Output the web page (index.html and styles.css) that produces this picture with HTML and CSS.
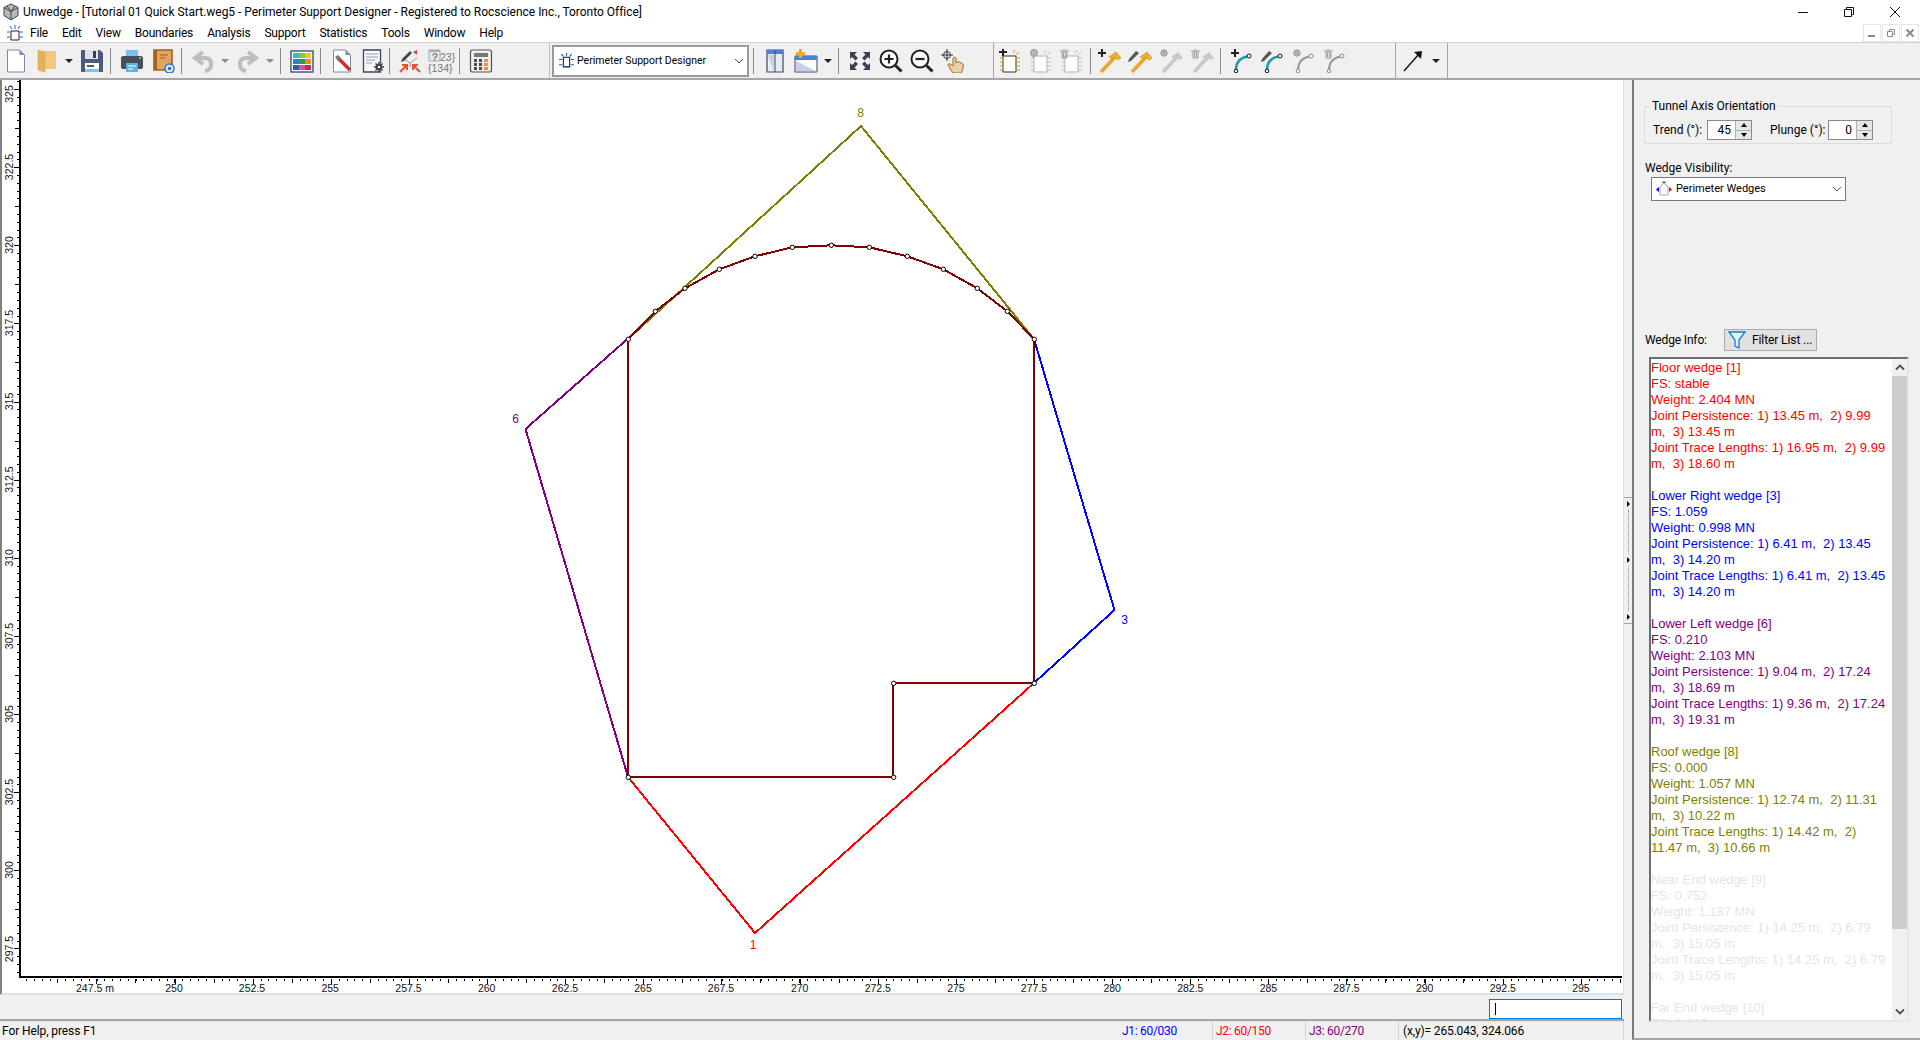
FILE: index.html
```html
<!DOCTYPE html>
<html lang="en">
<head>
<meta charset="utf-8">
<title>Unwedge</title>
<link rel="stylesheet" href="styles.css">
</head>
<body>
<div class="titlebar">
  <svg class="app-ico" width="18" height="18" viewBox="0 0 18 18"><path d="M9 1l7 3.500v8L9 17l-7-4.500v-8z" fill="#b8b8b8" stroke="#444"/><path d="M2 4.500l7 4 7-4M9 8.500V17M5 3l4 5.500L13 3" fill="none" stroke="#444"/></svg>
  <span class="title-text">Unwedge - [Tutorial 01 Quick Start.weg5 - Perimeter Support Designer - Registered to Rocscience Inc., Toronto Office]</span>
  <div class="winctl">
    <span class="wbtn"><svg width="12" height="12" viewBox="0 0 12 12"><path d="M1 6.500h10" stroke="#111"/></svg></span>
    <span class="wbtn"><svg width="12" height="12" viewBox="0 0 12 12"><path d="M1.500 3.500h7v7h-7zM3.500 3.500v-2h7v7h-2" fill="none" stroke="#111"/></svg></span>
    <span class="wbtn"><svg width="12" height="12" viewBox="0 0 12 12"><path d="M1 1l10 10M11 1L1 11" stroke="#111"/></svg></span>
  </div>
</div>
<div class="menubar">
  <svg class="menu-ico" width="16" height="16" viewBox="0 0 16 16"><path d="M4 6h8v9H4z" fill="#fff" stroke="#223"/><path d="M8 0v4M3 1l2 3M13 1l-2 3M0 7h3M16 7h-3M0 12h3M16 12h-3" stroke="#1a5fd0"/></svg>
  <span class="mi">File</span><span class="mi">Edit</span><span class="mi">View</span><span class="mi">Boundaries</span><span class="mi">Analysis</span><span class="mi">Support</span><span class="mi">Statistics</span><span class="mi">Tools</span><span class="mi">Window</span><span class="mi">Help</span>
  <div class="mdi">
    <span class="mdibtn"><svg width="10" height="10" viewBox="0 0 10 10"><path d="M1 8h7" stroke="#8a8a8a" stroke-width="2"/></svg></span>
    <span class="mdibtn"><svg width="10" height="10" viewBox="0 0 10 10"><path d="M1.500 3.500h5v5h-5zM3.500 3V1.500h5v5H7" fill="none" stroke="#8a8a8a"/></svg></span>
    <span class="mdibtn"><svg width="10" height="10" viewBox="0 0 10 10"><path d="M1.500 1.500l7 7M8.500 1.500l-7 7" stroke="#8a8a8a" stroke-width="2"/></svg></span>
  </div>
</div>
<div class="toolbar">
  <div class="tbsec sec1">
    <span class="btn"><svg width="24" height="24" viewBox="0 0 24 24"><path d="M3.500 1h12l5 5v17h-17z" fill="#fff" stroke="#7b8aa8"/><path d="M15.500 1v5h5z" fill="#7b8aa8"/></svg></span>
    <span class="btn"><svg width="24" height="24" viewBox="0 0 24 24"><path d="M8 2h13v18H8z" fill="#f0c880"/><path d="M3 1l7 2v20l-7-2z" fill="#e4b060" stroke="#d9a754" stroke-width=".6"/></svg></span>
    <span class="drop"><i class="tri"></i></span>
    <span class="btn"><svg width="24" height="24" viewBox="0 0 24 24"><path d="M1 1h19l3 3v19H1z" fill="#4c5a80"/><path d="M5 1h13v9H5z" fill="#dfe3ec"/><path d="M13 2h3v7h-3z" fill="#333f5e"/><path d="M5 14h14v9H5z" fill="#fff"/><path d="M7 17h7" stroke="#4c5a80" stroke-width="2"/><path d="M5 20h14v3H5z" fill="#86c2ee"/></svg></span>
    <i class="sep"></i>
    <span class="btn"><svg width="24" height="24" viewBox="0 0 24 24"><path d="M6 1h12v7H6z" fill="#78c0ee"/><path d="M3 7h18q2 0 2 3v8q0 2-2 2H3q-2 0-2-2v-8q0-3 2-3z" fill="#46505a"/><path d="M19 8h2v2h-2z" fill="#3fce6a"/><path d="M6 14h12v9H6z" fill="#5eaee8"/><path d="M8 17h8M8 20h5" stroke="#fff"/></svg></span>
    <span class="btn"><svg width="24" height="24" viewBox="0 0 24 24"><path d="M3 1h18v20H3z" fill="#e0a560" stroke="#a55f1e" stroke-width="1.600"/><path d="M3 1h3v20H3z" fill="#a55f1e"/><path d="M9 6h8M9 9h5" stroke="#a55f1e"/><circle cx="18.500" cy="19.500" r="4.500" fill="#dcebfa" stroke="#2d72cc" stroke-width="1.500"/><circle cx="18.500" cy="19.500" r="1.800" fill="#2d72cc"/></svg></span>
    <i class="sep"></i>
    <span class="btn"><svg width="24" height="24" viewBox="0 0 24 24"><path d="M12 3L4 9l8 6" fill="none" stroke="#bdbdbd" stroke-width="4"/><path d="M5 9h9q6 0 6 6v1q0 5-6 6" fill="none" stroke="#bdbdbd" stroke-width="4"/></svg></span>
    <span class="drop"><i class="tri gray"></i></span>
    <span class="btn"><svg width="24" height="24" viewBox="0 0 24 24"><path d="M12 3l8 6-8 6" fill="none" stroke="#bdbdbd" stroke-width="4"/><path d="M19 9h-9q-6 0-6 6v1q0 5 6 6" fill="none" stroke="#bdbdbd" stroke-width="4"/></svg></span>
    <span class="drop"><i class="tri gray"></i></span>
    <i class="sep"></i>
    <span class="btn"><svg width="24" height="24" viewBox="0 0 24 24"><path d="M1 2h22v21H1z" fill="#fff" stroke="#4c5a80" stroke-width="1.500"/><path d="M3 4h6v5H3z" fill="#35b8c8"/><path d="M9 4h6v5H9z" fill="#8cc63f"/><path d="M15 4h6v5h-6z" fill="#f2c230"/><path d="M3 10h6v5H3z" fill="#2a82c8"/><path d="M9 10h6v5H9z" fill="#27a045"/><path d="M15 10h6v5h-6z" fill="#ee8a1f"/><path d="M3 16h6v5H3z" fill="#2a5db0"/><path d="M9 16h6v5H9z" fill="#e04bb0"/><path d="M15 16h6v5h-6z" fill="#d02840"/></svg></span>
    <i class="sep"></i>
    <span class="btn"><svg width="24" height="24" viewBox="0 0 24 24"><path d="M3.500 1h12l5 5v17h-17z" fill="#fff" stroke="#7b8aa8"/><path d="M15.500 1v5h5z" fill="#7b8aa8"/><path d="M8 9l12 12" stroke="#c8302a" stroke-width="3.500"/><path d="M5 8l3-2 3 3-3 3z" fill="#777"/></svg></span>
    <span class="btn"><svg width="24" height="24" viewBox="0 0 24 24"><path d="M2.500 1h17v22h-17z" fill="#f6f8fb" stroke="#3c4660" stroke-width="1.300"/><path d="M5 5h12M5 8h12M5 11h9M5 14h6" stroke="#8aa0c0"/><circle cx="18" cy="18" r="3.500" fill="#333" stroke="#fff"/><path d="M18 13v10M13 18h10M14.500 14.500l7 7M21.500 14.500l-7 7" stroke="#333" stroke-width="1.500"/><circle cx="18" cy="18" r="1.300" fill="#fff"/></svg></span>
    <i class="sep sep-n"></i>
    <span class="btn"><svg width="24" height="24" viewBox="0 0 24 24"><path d="M5 9l7 5 7-5M12 14v4" fill="none" stroke="#999"/><path d="M4 10l8-8 2 2-8 8-3 1z" fill="#444"/><path d="M15 3l4-2 0 5z" fill="#e84030"/><path d="M2 23l7-7M4 16h5v5M22 23l-7-7M20 16h-5v5" fill="none" stroke="#ef4a35" stroke-width="2"/></svg></span>
    <span class="btn btn-txt"><svg width="26" height="24" viewBox="0 0 26 24"><path d="M1 1h11v11H1z" fill="#e8e8e8" stroke="#a8a8a8"/><path d="M1 1h11v2H1z" fill="#a8a8a8"/><text class="ico-q" x="3.500" y="11.500">?</text><text class="ico-t" x="12" y="12">23}</text><text class="ico-t" x="0" y="22.500">{134}</text></svg></span>
    <i class="sep"></i>
    <span class="btn"><svg width="24" height="24" viewBox="0 0 24 24"><path d="M3.500 1h17q2 0 2 2v18q0 2-2 2h-17q-2 0-2-2V3q0-2 2-2z" fill="#eee" stroke="#555" stroke-width="1.200"/><path d="M5 4h14v4H5z" fill="#777"/><path d="M5 10h3v3H5zM10 10h3v3h-3zM5 14h3v3H5zM10 14h3v3h-3zM5 18h3v3H5zM10 18h3v3h-3z" fill="#4a4a4a"/><path d="M15 10h4v3h-4zM15 14h4v3h-4zM15 18h4v3h-4z" fill="#e8943a"/></svg></span>
  </div>
  <div class="tbsec sec2">
    <div class="tcombo">
      <svg width="17" height="17" viewBox="0 0 16 16"><path d="M5 5h6v9H5z" fill="#fff" stroke="#122"/><path d="M8 1v3M3 2l2 2M13 2l-2 2M1 7h3M15 7h-3M1 12h3M15 12h-3" stroke="#1a5fd0"/></svg>
      <span class="tcombo-text">Perimeter Support Designer</span>
      <svg class="chev" width="10" height="6" viewBox="0 0 10 6"><path d="M1 1l4 4 4-4" fill="none" stroke="#444"/></svg>
    </div>
    <i class="sep sep-c"></i>
    <span class="btn"><svg width="24" height="24" viewBox="0 0 24 24"><path d="M4 1h16v22H4z" fill="#e8ecf4" stroke="#3d4866" stroke-width="1.200"/><path d="M4 1h16v4H4z" fill="#4f7fd8"/><path d="M12 1v22" stroke="#3d4866"/><path d="M5 6l6 16V6z" fill="#c6d0e2"/></svg></span>
    <span class="btn"><svg width="24" height="24" viewBox="0 0 24 24"><path d="M1 7h22v16H1z" fill="#fff" stroke="#3d4866"/><path d="M1 7h22v4H1z" fill="#4f7fd8"/><path d="M2 12l20 10H2z" fill="#c6d0e2"/><path d="M5 0h3v3h3v3H8v3H5V6H2V3h3z" fill="#f4a81c"/></svg></span>
    <span class="drop"><i class="tri"></i></span>
    <i class="sep"></i>
    <span class="btn"><svg width="24" height="24" viewBox="0 0 24 24"><g fill="#3a4050"><path id="fit" d="M2 3h7L6.500 5.500 10 9l-2.500 2.500L4 8 2 10z"/><path d="M22 3h-7l2.500 2.500L14 9l2.500 2.500L20 8l2 2z"/><path d="M2 21h7l-2.500-2.500L10 15l-2.500-2.500L4 16l-2-2z"/><path d="M22 21h-7l2.500-2.500L14 15l2.500-2.500L20 16l2-2z"/></g></svg></span>
    <span class="btn"><svg width="24" height="24" viewBox="0 0 24 24"><circle cx="10" cy="10" r="8.500" fill="#fff" stroke="#222" stroke-width="2"/><path d="M10 5.500v9M5.500 10h9" stroke="#222" stroke-width="2.200"/><path d="M16.500 16.500l6 6" stroke="#222" stroke-width="3"/></svg></span>
    <span class="btn"><svg width="24" height="24" viewBox="0 0 24 24"><circle cx="10" cy="10" r="8.500" fill="#fff" stroke="#222" stroke-width="2"/><path d="M5.500 10h9" stroke="#222" stroke-width="2.200"/><path d="M16.500 16.500l6 6" stroke="#222" stroke-width="3"/></svg></span>
    <span class="btn"><svg width="24" height="24" viewBox="0 0 24 24"><circle cx="6" cy="6" r="3.500" fill="none" stroke="#333"/><path d="M6 0v12M0 6h12" stroke="#333"/><path d="M12 9q2-2 3 0v5l1-1q3-1 4 1l2 1q1 4-1 7l-1 2h-8l-2-3-3-5q0-2 2-1l3 2z" fill="#e8cfa8" stroke="#a06a1e"/></svg></span>
  </div>
  <div class="tbsec sec3">
    <span class="btn"><svg width="24" height="24" viewBox="0 0 24 24"><path d="M5 7h13v16H5z" fill="#fff" stroke="#333"/><path d="M2 9h3M2 13h3M2 17h3M2 21h3M18 9h4M18 13h4M18 17h4M18 21h4M15 4l2-3M18 6l3-3" stroke="#d89a2c"/><path d="M1 3h8M5 0v7" stroke="#222" stroke-width="2"/></svg></span>
    <span class="btn"><svg width="24" height="24" viewBox="0 0 24 24"><path d="M5 7h13v16H5z" fill="#fff" stroke="#b5b5b5"/><path d="M2 9h3M2 13h3M2 17h3M2 21h3M18 9h4M18 13h4M18 17h4M18 21h4M15 4l2-3M18 6l3-3" stroke="#bcbcbc"/><circle cx="5" cy="4" r="3" fill="none" stroke="#a8a8a8" stroke-width="2"/><path d="M5 0v8M1 4h8M2 1l6 6M8 1L2 7" stroke="#a8a8a8"/></svg></span>
    <span class="btn"><svg width="24" height="24" viewBox="0 0 24 24"><path d="M5 7h13v16H5z" fill="#fff" stroke="#b5b5b5"/><path d="M2 9h3M2 13h3M2 17h3M2 21h3M18 9h4M18 13h4M18 17h4M18 21h4M15 4l2-3M18 6l3-3" stroke="#bcbcbc"/><path d="M0 2h9M3 0h3M2 3h5v6H2z" fill="none" stroke="#999"/><path d="M3.500 4v4M5.500 4v4" stroke="#999"/></svg></span>
    <i class="sep sep-s"></i>
    <span class="btn"><svg width="24" height="24" viewBox="0 0 24 24"><path d="M4 23L19 7" stroke="#e8a828" stroke-width="3.500"/><path d="M12 8l7-5 5 6-3 2-3-3-2 2z" fill="#f0b030" stroke="#c88a10" stroke-width=".6"/><path d="M1 4h8M5 0v8" stroke="#222" stroke-width="2"/></svg></span>
    <span class="btn"><svg width="24" height="24" viewBox="0 0 24 24"><path d="M4 23L19 7" stroke="#e8a828" stroke-width="3.500"/><path d="M12 8l7-5 5 6-3 2-3-3-2 2z" fill="#f0b030" stroke="#c88a10" stroke-width=".6"/><path d="M1 10l7-8 3 2-8 8-3 1z" fill="#555"/></svg></span>
    <span class="btn"><svg width="24" height="24" viewBox="0 0 24 24"><path d="M4 23L19 7" stroke="#c8c8c8" stroke-width="3.500"/><path d="M12 8l7-5 5 6-3 2-3-3-2 2z" fill="#c8c8c8"/><circle cx="5" cy="4" r="2.500" fill="none" stroke="#a8a8a8" stroke-width="2"/><path d="M5 0v8M1 4h8M2 1l6 6M8 1L2 7" stroke="#a8a8a8"/></svg></span>
    <span class="btn"><svg width="24" height="24" viewBox="0 0 24 24"><path d="M4 23L19 7" stroke="#c8c8c8" stroke-width="3.500"/><path d="M12 8l7-5 5 6-3 2-3-3-2 2z" fill="#c8c8c8"/><path d="M1 2h9M4 0h3M3 3h5v6H3z" fill="none" stroke="#999"/><path d="M4.500 4v4M6.500 4v4" stroke="#999"/></svg></span>
    <i class="sep"></i>
    <span class="btn"><svg width="24" height="24" viewBox="0 0 24 24"><path d="M6 21q0-11 11-13.500" fill="none" stroke="#1a9aa8" stroke-width="2.500"/><circle cx="19" cy="7" r="2" fill="#fff" stroke="#111"/><circle cx="6" cy="22" r="1.800" fill="#fff" stroke="#111"/><path d="M1 4h8M5 0v8" stroke="#222" stroke-width="2"/></svg></span>
    <span class="btn"><svg width="24" height="24" viewBox="0 0 24 24"><path d="M6 21q0-11 11-13.500" fill="none" stroke="#1a9aa8" stroke-width="2.500"/><circle cx="19" cy="7" r="2" fill="#fff" stroke="#111"/><circle cx="6" cy="22" r="1.800" fill="#fff" stroke="#111"/><path d="M1 10l7-8 3 2-8 8-3 1z" fill="#555"/></svg></span>
    <span class="btn"><svg width="24" height="24" viewBox="0 0 24 24"><path d="M6 21q0-11 11-13.500" fill="none" stroke="#9a9a9a" stroke-width="2"/><circle cx="19" cy="7" r="2" fill="#fff" stroke="#888"/><circle cx="6" cy="22" r="1.800" fill="#fff" stroke="#888"/><circle cx="5" cy="4" r="2.500" fill="none" stroke="#a8a8a8" stroke-width="2"/><path d="M5 0v8M1 4h8M2 1l6 6M8 1L2 7" stroke="#a8a8a8"/></svg></span>
    <span class="btn"><svg width="24" height="24" viewBox="0 0 24 24"><path d="M6 21q0-11 11-13.500" fill="none" stroke="#9a9a9a" stroke-width="2"/><circle cx="19" cy="7" r="2" fill="#fff" stroke="#888"/><circle cx="6" cy="22" r="1.800" fill="#fff" stroke="#888"/><path d="M1 2h9M4 0h3M3 3h5v6H3z" fill="none" stroke="#999"/><path d="M4.500 4v4M6.500 4v4" stroke="#999"/></svg></span>
  </div>
  <div class="tbsec sec4">
    <span class="btn"><svg width="24" height="24" viewBox="0 0 24 24"><path d="M3 22L18 5" stroke="#111" stroke-width="1.400"/><path d="M13 3l8-1-1 8z" fill="#111"/></svg></span>
    <span class="drop"><i class="tri"></i></span>
  </div>
</div>
<div class="workspace">
  <div class="leftcol">
    <div class="view">
      <svg class="plot" width="1621" height="913" viewBox="2 80 1621 913">
        <g class="axes">
          <path d="M20 80V977H1622" fill="none" stroke="#000" stroke-width="2"/>
          <path d="M26.200 980H1622" stroke="#000" stroke-width="2" stroke-dasharray="1 6.8125"/>
          <path d="M57.300 981H1622" stroke="#000" stroke-width="4" stroke-dasharray="1 38.06"/>
          <path d="M96.400 981.500H1622" stroke="#000" stroke-width="5" stroke-dasharray="1 77.125"/>
          <path d="M17.500 81.200V977" stroke="#000" stroke-width="2" stroke-dasharray="1 6.8125"/>
          <path d="M16.500 128V977" stroke="#000" stroke-width="4" stroke-dasharray="1 77.125"/>
          <path d="M16 89V977" stroke="#000" stroke-width="5" stroke-dasharray="1 77.125"/>
        </g>
        <g class="xlabels">
          <text x="95" y="991.500">247.5 m</text><text x="174" y="991.500">250</text><text x="252" y="991.500">252.5</text><text x="330.200" y="991.500">255</text><text x="408.500" y="991.500">257.5</text><text x="486.700" y="991.500">260</text><text x="565" y="991.500">262.5</text><text x="643" y="991.500">265</text><text x="721" y="991.500">267.5</text><text x="799.700" y="991.500">270</text><text x="877.800" y="991.500">272.5</text><text x="955.900" y="991.500">275</text><text x="1034" y="991.500">277.5</text><text x="1112.200" y="991.500">280</text><text x="1190.300" y="991.500">282.5</text><text x="1268.400" y="991.500">285</text><text x="1346.500" y="991.500">287.5</text><text x="1424.700" y="991.500">290</text><text x="1502.800" y="991.500">292.5</text><text x="1580.900" y="991.500">295</text>
        </g>
        <g class="xlabels">
          <text transform="translate(12.500 94) rotate(-90)">325</text>
          <text transform="translate(12.500 167) rotate(-90)">322.5</text>
          <text transform="translate(12.500 245) rotate(-90)">320</text>
          <text transform="translate(12.500 323) rotate(-90)">317.5</text>
          <text transform="translate(12.500 401.500) rotate(-90)">315</text>
          <text transform="translate(12.500 479.600) rotate(-90)">312.5</text>
          <text transform="translate(12.500 557.800) rotate(-90)">310</text>
          <text transform="translate(12.500 636) rotate(-90)">307.5</text>
          <text transform="translate(12.500 714) rotate(-90)">305</text>
          <text transform="translate(12.500 792) rotate(-90)">302.5</text>
          <text transform="translate(12.500 870) rotate(-90)">300</text>
          <text transform="translate(12.500 949) rotate(-90)">297.5</text>
        </g>
        <g class="wires" fill="none" stroke-width="2">
          <path d="M628 339L861 126L1034 339" stroke="#808000"/>
          <path d="M1034 339L1114.500 610L1034 683" stroke="#0000ff"/>
          <path d="M628 777L525.500 429L641 327" stroke="#800080"/>
          <path d="M628 777L755 933L1034 683" stroke="#ff0000"/>
          <path d="M628 777H893V683H1034V339L1007.300 311.300L977.300 288.300L943.300 269.300L907.300 256.300L869.300 247.300L831.300 245.300L792.300 247.300L755 256.300L719.300 269.300L685 288.300L655.300 311.300L628 339Z" stroke="#800000"/>
        </g>
        <g class="nodes">
          <circle cx="628.300" cy="777.300" r="2.200"/><circle cx="893.700" cy="777.300" r="2.200"/><circle cx="893.700" cy="683.300" r="2.200"/><circle cx="1034.300" cy="683.300" r="2.200"/><circle cx="1034.300" cy="339.300" r="2.200"/><circle cx="1007.300" cy="311.300" r="2.200"/><circle cx="977.300" cy="288.300" r="2.200"/><circle cx="943.300" cy="269.300" r="2.200"/><circle cx="907.300" cy="256.300" r="2.200"/><circle cx="869.300" cy="247.300" r="2.200"/><circle cx="831.300" cy="245.300" r="2.200"/><circle cx="792.300" cy="247.300" r="2.200"/><circle cx="755" cy="256.300" r="2.200"/><circle cx="719.300" cy="269.300" r="2.200"/><circle cx="685" cy="288.300" r="2.200"/><circle cx="655.300" cy="311.300" r="2.200"/><circle cx="628.300" cy="339.300" r="2.200"/>
        </g>
        <text class="pt olive" x="860.500" y="117">8</text>
        <text class="pt purple" x="515.500" y="423">6</text>
        <text class="pt blue" x="1124.500" y="624">3</text>
        <text class="pt red" x="753" y="949">1</text>
      </svg>
    </div>
    <div class="cmdbar"><div class="cmdinput"><i class="caret"></i></div></div>
    <div class="status">
      <span class="st-help">For Help, press F1</span>
      <span class="st st-j1 blue">J1: 60/030</span>
      <span class="st st-j red">J2: 60/150</span>
      <span class="st st-j purple">J3: 60/270</span>
      <span class="st st-xy">(x,y)= 265.043, 324.066</span>
    </div>
  </div>
  <div class="splitter">
    <div class="split-grip">
      <i class="arr"></i><i class="dots"></i><i class="arr"></i><i class="dots"></i><i class="arr"></i>
    </div>
  </div>
  <aside class="panel">
    <fieldset class="group">
      <legend>Tunnel Axis Orientation</legend>
      <div class="row">
        <span class="lbl lbl-t">Trend (°):</span>
        <div class="spin"><span class="spin-val">45</span><span class="spin-btns"><i class="sb"><i class="up"></i></i><i class="sb"><i class="dn"></i></i></span></div>
        <span class="lbl lbl-p">Plunge (°):</span>
        <div class="spin"><span class="spin-val">0</span><span class="spin-btns"><i class="sb"><i class="up"></i></i><i class="sb"><i class="dn"></i></i></span></div>
      </div>
    </fieldset>
    <div class="vis-label">Wedge Visibility:</div>
    <div class="combo">
      <svg width="16" height="16" viewBox="0 0 16 16"><path d="M4 6l4-4 4 4v8H4z" fill="#fff" stroke="#aaa"/><path d="M5.500 2l2.500-2 2.500 2z" fill="#1f9a3a"/><path d="M3 6v5l-3-2.500z" fill="#0000ff"/><path d="M13 6v5l3-2.500z" fill="#ff0000"/></svg>
      <span class="combo-text">Perimeter Wedges</span>
      <svg class="chev" width="10" height="6" viewBox="0 0 10 6"><path d="M1 1l4 4 4-4" fill="none" stroke="#555"/></svg>
    </div>
    <div class="info-row">
      <span class="info-label">Wedge Info:</span>
      <div class="filter">
        <svg width="18" height="20" viewBox="0 0 18 20"><path d="M1 2h16l-6 8v8l-4-2v-6z" fill="#e8f4fc" stroke="#1c7cc8" stroke-width="1.300"/></svg>
        <span>Filter List ...</span>
      </div>
    </div>
    <div class="listbox">
      <div class="list-text">
        <p class="wedge red">Floor wedge [1]
FS: stable
Weight: 2.404 MN
Joint Persistence: 1) 13.45 m,  2) 9.99
m,  3) 13.45 m
Joint Trace Lengths: 1) 16.95 m,  2) 9.99
m,  3) 18.60 m</p>
        <p class="wedge blue">Lower Right wedge [3]
FS: 1.059
Weight: 0.998 MN
Joint Persistence: 1) 6.41 m,  2) 13.45
m,  3) 14.20 m
Joint Trace Lengths: 1) 6.41 m,  2) 13.45
m,  3) 14.20 m</p>
        <p class="wedge purple">Lower Left wedge [6]
FS: 0.210
Weight: 2.103 MN
Joint Persistence: 1) 9.04 m,  2) 17.24
m,  3) 18.69 m
Joint Trace Lengths: 1) 9.36 m,  2) 17.24
m,  3) 19.31 m</p>
        <p class="wedge olive">Roof wedge [8]
FS: 0.000
Weight: 1.057 MN
Joint Persistence: 1) 12.74 m,  2) 11.31
m,  3) 10.22 m
Joint Trace Lengths: 1) 14.42 m,  2)
11.47 m,  3) 10.66 m</p>
        <p class="wedge faded">Near End wedge [9]
FS: 0.752
Weight: 1.187 MN
Joint Persistence: 1) 14.25 m,  2) 6.79
m,  3) 15.05 m
Joint Trace Lengths: 1) 14.25 m,  2) 6.79
m,  3) 15.05 m</p>
        <p class="wedge faded">Far End wedge [10]
FS: 0.635</p>
      </div>
      <div class="scroll">
        <span class="scr-btn"><svg width="10" height="7" viewBox="0 0 10 7"><path d="M1 5.500l4-4 4 4" fill="none" stroke="#505050" stroke-width="1.800"/></svg></span>
        <div class="scr-track"><div class="scr-thumb"></div></div>
        <span class="scr-btn"><svg width="10" height="7" viewBox="0 0 10 7"><path d="M1 1.500l4 4 4-4" fill="none" stroke="#505050" stroke-width="1.800"/></svg></span>
      </div>
    </div>
  </aside>
</div>
</body>
</html>
```
FILE: styles.css
```css
* { box-sizing: border-box; }
html, body { margin: 0; padding: 0; }
body {
  width: 1920px; height: 1040px; overflow: hidden;
  display: flex; flex-direction: column;
  background: #f0f0f0; color: #000;
  font: 12px/16px Roboto, "Liberation Sans", sans-serif;
}
i { display: block; font-style: normal; }
svg { display: block; flex: none; }

.titlebar { height: 20px; background: #fff; display: flex; align-items: center; padding-left: 2px; padding-top: 4px; flex: none; }
.title-text { margin-left: 3px; letter-spacing: -.02px; }
.winctl { margin-left: auto; margin-right: 2px; display: flex; }
.wbtn { width: 46px; height: 16px; display: flex; align-items: center; justify-content: center; }

.menubar { height: 22px; background: #fff; display: flex; align-items: center; padding: 4px 0 0 7px; flex: none; }
.menu-ico { margin-right: 7px; }
.mi { margin-right: 14px; letter-spacing: -.2px; }
.mdi { margin-left: auto; align-self: flex-end; display: flex; gap: 1px; padding-right: 1px; }
.mdibtn { width: 18px; height: 18px; border: 1px solid #e6e6e6; display: flex; align-items: center; justify-content: center; }

.toolbar { height: 38px; flex: none; display: flex; background: #f0f0f0; border-top: 1px solid #cfcfcf; border-bottom: 2px solid #a6a6a6; }
.tbsec { display: flex; align-items: center; flex: none; }
.sec1 { width: 550px; border-right: 1px solid #c0c0c0; }
.sec2 { width: 444px; border-right: 1px solid #a6a6a6; padding-left: 2px; }
.sec3 { width: 402px; border-right: 1px solid #a6a6a6; }
.sec4 { width: 52px; border-right: 1px solid #a6a6a6; padding-left: 1.5px; }
.btn { width: 31px; height: 24px; display: flex; justify-content: center; flex: none; }
.btn-txt svg { overflow: visible; }
.drop { width: 14px; display: flex; justify-content: center; flex: none; }
.tri { width: 0; height: 0; border-left: 4px solid transparent; border-right: 4px solid transparent; border-top: 4px solid #222; }
.tri.gray { border-top-color: #8c8c8c; }
.sep { width: 1px; height: 26px; background: #8c8c8c; margin: 0 5px 0 3px; flex: none; }
.sep-n { margin: 0 4px 0 1px; }
.sep-c { margin: 0 5px 0 4px; }
.sep-s { margin: 0 2px 0 3px; }
.ico-q { font: 700 11px "Liberation Sans", sans-serif; fill: #888; }
.ico-t { font: 10.5px "Liberation Sans", sans-serif; fill: #777; }

.tcombo { width: 197px; height: 32px; background: #fff; border: 2px solid #9a9a9a; display: flex; align-items: center; padding-left: 4px; flex: none; }
.tcombo-text { margin-left: 2px; font-size: 10.5px; }
.chev { margin-left: auto; margin-right: 3px; }

.workspace { flex: 1; display: flex; min-height: 0; }
.leftcol { width: 1624px; display: flex; flex-direction: column; flex: none; }
.view { height: 915px; flex: none; background: #fff; border-left: 2px solid #808080; border-right: 1px solid #e0e0e0; border-bottom: 2px solid #e0e0e0; }
.axes path { shape-rendering: crispEdges; }
.xlabels text { font: 10.5px "Liberation Sans", sans-serif; text-anchor: middle; fill: #111; }
.wires path { shape-rendering: crispEdges; }
.nodes circle { fill: #fff; stroke: #000; stroke-width: 1; }
.pt { font: 12px "Liberation Sans", sans-serif; text-anchor: middle; }
text.olive { fill: #808000; }
text.purple { fill: #800080; }
text.blue { fill: #0000ff; }
text.red { fill: #ff0000; }

.cmdbar { height: 24px; flex: none; display: flex; justify-content: flex-end; padding: 4px 2px 0 0; }
.cmdinput { width: 133px; height: 20px; background: #fff; border: 1px solid #0078d7; padding: 3px 0 0 5px; }
.caret { width: 1px; height: 12px; background: #000; }

.status { flex: 1; display: flex; align-items: center; border-top: 2px solid #a6a6a6; box-shadow: inset 0 1px 0 #e4e4e4; }
.st-help { padding-left: 2px; width: 1118px; flex: none; letter-spacing: -.1px; }
.st { height: 19px; display: flex; align-items: center; padding-left: 4px; letter-spacing: -.3px; }
.st-j1 { width: 94px; flex: none; }
.st-j { width: 93px; flex: none; padding-left: 3px; border-left: 1px solid #d4d4d4; }
.st-xy { flex: 1; letter-spacing: -.15px; border-left: 1px solid #d4d4d4; border-right: 1px solid #d4d4d4; }
.blue { color: #0000ff; }
.red { color: #ff0000; }
.purple { color: #800080; }
.olive { color: #808000; }
.faded { color: #e8e4e4; }

.splitter { width: 8px; flex: none; display: flex; flex-direction: column; justify-content: center; }
.split-grip { height: 127px; border-top: 1px solid #a6a6a6; border-bottom: 1px solid #a6a6a6; display: flex; flex-direction: column; align-items: center; padding: 3px 0; justify-content: space-between; }
.arr { width: 0; height: 0; border-top: 3px solid transparent; border-bottom: 3px solid transparent; border-left: 3px solid #000; flex: none; }
.dots { flex: 1; width: 1px; margin: 3px 0; border-left: 1px dotted #909090; }

.panel { flex: 1; min-width: 0; border-left: 2px solid #7a7a7a; border-bottom: 2px solid #a6a6a6; padding: 17px 0 0 10px; display: flex; flex-direction: column; }
.group { margin: 0; width: 248px; border: 1px solid #dcdcdc; padding: 7px 8px 3px; height: 47px; }
.group legend { padding: 0 2px; margin-left: -3px; line-height: 18px; }
.row { display: flex; align-items: center; height: 20px; margin-top: -2px; }
.lbl { flex: none; }
.lbl-t { width: 54px; }
.lbl-p { width: 58px; margin-left: 18px; }
.spin { width: 45px; height: 20px; display: flex; flex: none; background: #fff; border: 1px solid #8a8a8a; }
.spin-val { width: 27px; text-align: right; padding-right: 4px; line-height: 18px; }
.spin-btns { flex: 1; display: flex; flex-direction: column; background: #f0f0f0; border-left: 1px solid #b0b0b0; }
.sb { flex: 1; display: flex; align-items: center; justify-content: center; background: #e6e6e6; border-bottom: 1px solid #b0b0b0; }
.sb:last-child { border-bottom: 0; }
.up { width: 0; height: 0; border-left: 3px solid transparent; border-right: 3px solid transparent; border-bottom: 4px solid #000; }
.dn { width: 0; height: 0; border-left: 3px solid transparent; border-right: 3px solid transparent; border-top: 4px solid #000; }

.vis-label { margin-top: 16px; margin-left: 1px; height: 16px; }
.combo { margin: 1px 0 0 7px; width: 195px; height: 24px; background: #fff; border: 1px solid #7a7a7a; display: flex; align-items: center; padding-left: 4px; }
.combo-text { margin-left: 4px; font-size: 11px; }

.info-row { margin-top: 128px; margin-left: 1px; display: flex; align-items: center; height: 22px; }
.info-label { width: 79px; letter-spacing: -.15px; }
.filter { width: 93px; height: 22px; background: #e1e1e1; border: 1px solid #adadad; display: flex; align-items: center; padding-left: 3px; gap: 6px; letter-spacing: -.1px; }

.listbox { margin: 6px 0 0 5px; width: 260px; height: 665px; background: #fff; border-top: 2px solid #6e6e6e; border-left: 2px solid #6e6e6e; border-right: 2px solid #e6e6e6; border-bottom: 2px solid #e6e6e6; display: flex; overflow: hidden; }
.list-text { flex: 1; min-width: 0; overflow: hidden; padding-top: 1px; font: 13px/16px "Liberation Sans", sans-serif; }
.wedge { margin: 0 0 16px; white-space: pre; }
.scroll { width: 15px; flex: none; background: #f0f0f0; display: flex; flex-direction: column; }
.scr-btn { height: 17px; flex: none; display: flex; align-items: center; justify-content: center; }
.scr-track { flex: 1; }
.scr-thumb { height: 553px; background: #cdcdcd; }
```
